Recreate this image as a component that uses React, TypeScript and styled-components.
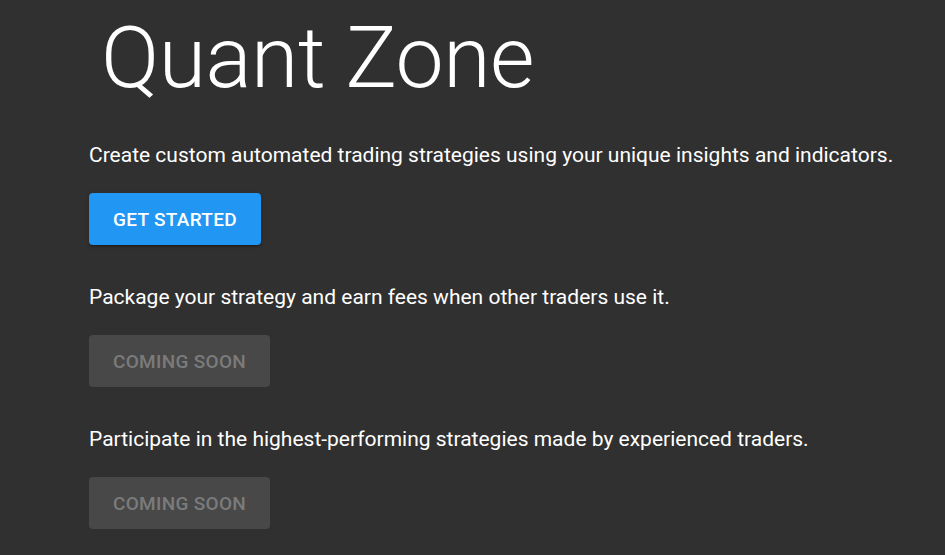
import React from "react";
import styled, { createGlobalStyle } from "styled-components";

const GlobalStyle = createGlobalStyle`
  html, body {
    margin: 0;
    padding: 0;
    background: #303030;
  }
  body {
    font-family: Roboto, "Noto Sans", Arial, sans-serif;
    color: #fff;
  }
`;

const Page = styled.main`
  min-height: 100vh;
  background: #303030;
  padding: 0 0 0 89px;
  box-sizing: border-box;
`;

const Title = styled.h1`
  margin: 0;
  padding: 14px 0 1px 12px;
  font-size: 86px;
  font-weight: 300;
  line-height: 88px;
  letter-spacing: -0.5px;
`;

const Section = styled.section`
  display: flex;
  flex-direction: column;
  align-items: flex-start;
`;

const Text = styled.p`
  margin: 37px 0 23px;
  font-size: 21px;
  line-height: 30px;
`;

const Button = styled.button<{ $disabled?: boolean }>`
  height: 52px;
  padding: 0 24px;
  border: none;
  border-radius: 4px;
  font-family: Roboto, "Noto Sans", Arial, sans-serif;
  font-size: 19px;
  font-weight: 500;
  letter-spacing: 0.3px;
  text-transform: uppercase;
  cursor: ${(p) => (p.$disabled ? "default" : "pointer")};
  background: ${(p) => (p.$disabled ? "#484848" : "#2196f3")};
  color: ${(p) => (p.$disabled ? "#7b7b7b" : "#fff")};
  box-shadow: ${(p) =>
    p.$disabled
      ? "none"
      : "0 3px 1px -2px rgba(0,0,0,0.2), 0 2px 2px 0 rgba(0,0,0,0.14), 0 1px 5px 0 rgba(0,0,0,0.12)"};
`;

const sections = [
  {
    text: "Create custom automated trading strategies using your unique insights and indicators.",
    label: "Get Started",
    disabled: false,
  },
  {
    text: "Package your strategy and earn fees when other traders use it.",
    label: "Coming Soon",
    disabled: true,
  },
  {
    text: "Participate in the highest-performing strategies made by experienced traders.",
    label: "Coming Soon",
    disabled: true,
  },
];

export default function App() {
  return (
    <>
      <GlobalStyle />
      <Page>
        <Title>Quant Zone</Title>
        {sections.map((s, i) => (
          <Section key={i}>
            <Text>{s.text}</Text>
            <Button $disabled={s.disabled} disabled={s.disabled}>
              {s.label}
            </Button>
          </Section>
        ))}
      </Page>
    </>
  );
}
